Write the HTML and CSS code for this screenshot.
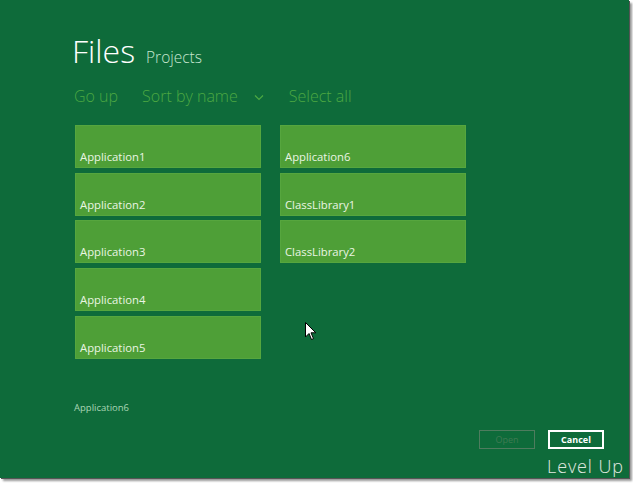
FILE: index.html
```html
<!DOCTYPE html>
<html>
<head>
<meta charset="utf-8">
<link rel="stylesheet" href="styles.css">
</head>
<body>
<div class="screen">
  <header class="head">
    <h1 class="title">Files</h1>
    <span class="sub">Projects</span>
  </header>
  <nav class="cmds">
    <span class="cmd">Go up</span>
    <span class="cmd sort">Sort by name <svg class="chev" width="10" height="7" viewBox="0 0 10 7"><path d="M1 1.5 L5 5.5 L9 1.5" fill="none" stroke="currentColor" stroke-width="1.2"/></svg></span>
    <span class="cmd">Select all</span>
  </nav>
  <div class="grid">
    <div class="tile">Application1</div>
    <div class="tile">Application2</div>
    <div class="tile">Application3</div>
    <div class="tile">Application4</div>
    <div class="tile">Application5</div>
    <div class="tile">Application6</div>
    <div class="tile">ClassLibrary1</div>
    <div class="tile">ClassLibrary2</div>
  </div>
  <div class="selected">Application6</div>
  <div class="buttons">
    <span class="btn disabled">Open</span>
    <span class="btn">Cancel</span>
  </div>
  <div class="brand">Level Up</div>
  <svg class="cursor" width="12" height="19" viewBox="0 0 12 19"><path d="M0.5 0.5 L0.5 15 L4 11.5 L6.5 17.5 L8.5 16.6 L6 10.8 L10.8 10.8 Z" fill="#fff" stroke="#000" stroke-width="1"/></svg>
</div>
</body>
</html>
```
FILE: styles.css
```css
html, body { margin: 0; padding: 0; background: #fff; }
body { width: 633px; height: 484px; overflow: hidden; }
.screen {
  position: relative;
  width: 629px;
  height: 478px;
  background: #0e6b3a;
  box-shadow: 1px 1px 0 #555, 3px 3px 2px #999;
  font-family: "Open Sans", "Noto Sans", sans-serif;
  padding: 0 0 0 74px;
  box-sizing: border-box;
}
.head { display: flex; align-items: baseline; padding-top: 31px; height: 40px; }
.title { margin: 0; font-weight: 300; font-size: 32px; color: #fff; line-height: 40px; margin-left: -2px; }
.sub { margin-left: 11px; font-size: 15.5px; font-weight: 300; color: #c6e6cf; }
.cmds { display: flex; align-items: center; margin-top: 13px; height: 24px; color: #4ca842; font-size: 16px; font-weight: 300; }
.cmd { display: flex; align-items: center; }
.cmd + .cmd { margin-left: 24px; }
.sort + .cmd { margin-left: 25px; }
.chev { margin-left: 16px; margin-top: 2px; }
.grid {
  margin-top: 17px;
  display: grid;
  grid-template-rows: repeat(5, 43px);
  grid-auto-flow: column;
  grid-template-columns: 186px 186px;
  column-gap: 19px;
  row-gap: 4.7px;
  margin-left: 1px;
}
.tile {
  background: #4e9f37;
  border: 1px solid #56a63e;
  box-sizing: border-box;
  color: #eaf5e4;
  font-size: 11.3px;
  display: flex;
  align-items: flex-end;
  padding: 0 0 3px 4px;
}
.selected { margin-top: 42px; font-size: 9.5px; color: #a9d6b5; }
.buttons { position: absolute; left: 479px; top: 430px; display: flex; gap: 13px; }
.btn {
  width: 56px; height: 19px; box-sizing: border-box;
  border: 2px solid #fff; color: #fff; font-size: 9px; font-weight: 700;
  display: flex; align-items: center; justify-content: center;
}
.btn.disabled { border: 1px solid #4e7c5e; color: #3f7a52; font-weight: 400; }
.brand {
  position: absolute; left: 547px; top: 454px;
  font-size: 18px; font-weight: 300; color: #dce9df; letter-spacing: 0.9px;
  text-shadow: 0 0 1px #3a6a50;
}
.cursor { position: absolute; left: 305px; top: 322px; }
```
